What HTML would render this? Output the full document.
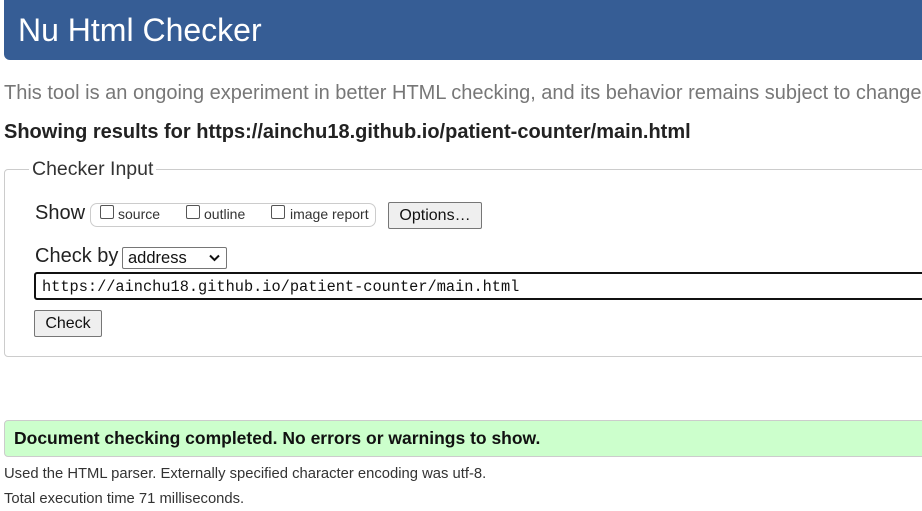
<!DOCTYPE html>
<html><head><style>
body{margin:0;width:922px;height:511px;overflow:hidden;background:#fff;font-family:"Liberation Sans",Arial,sans-serif;position:relative}
.a{position:absolute;white-space:nowrap}
</style></head><body>
<div class="a" style="left:4px;top:0;width:930px;height:60px;background:#365d95;border-radius:0 0 6px 6px"></div>
<div class="a" style="left:18px;top:12px;font-size:32px;color:#fff;line-height:36px">Nu Html Checker</div>
<div class="a" style="left:4px;top:81px;font-size:20px;color:#777;line-height:24px">This tool is an ongoing experiment in better HTML checking, and its behavior remains subject to change</div>
<div class="a" style="left:4px;top:120px;font-size:20px;font-weight:bold;color:#222;line-height:24px;letter-spacing:0px">Showing results for https://ainchu18.github.io/patient-counter/main.html</div>
<div class="a" style="left:4px;top:169px;width:930px;height:186px;border:1px solid #ccc;border-radius:4px"></div>
<div class="a" style="left:29px;top:158px;font-size:19.5px;color:#333;background:#fff;padding:0 3px;line-height:22px">Checker Input</div>
<div class="a" style="left:35px;top:202px;font-size:20px;color:#222;line-height:22px">Show</div>
<div class="a" style="left:90px;top:203px;width:284px;height:22px;border:1px solid #ccc;border-radius:7px"></div>
<div class="a" style="left:100px;top:205px;width:12px;height:12px;border:1px solid #555;border-radius:2px"></div>
<div class="a" style="left:118px;top:206px;font-size:14px;color:#333">source</div>
<div class="a" style="left:186px;top:205px;width:12px;height:12px;border:1px solid #555;border-radius:2px"></div>
<div class="a" style="left:204px;top:206px;font-size:14px;color:#333">outline</div>
<div class="a" style="left:271px;top:205px;width:12px;height:12px;border:1px solid #555;border-radius:2px"></div>
<div class="a" style="left:290px;top:206px;font-size:14px;color:#333">image report</div>
<div class="a" style="left:388px;top:202px;width:92px;height:25px;border:1px solid #767676;border-radius:2px;background:#efefef;font-size:16px;line-height:25px;text-align:center;color:#111">Options…</div>
<div class="a" style="left:35px;top:245px;font-size:20px;color:#222;line-height:22px">Check by</div>
<div class="a" style="left:122px;top:247px;width:103px;height:20px;border:1px solid #767676;border-radius:2px;font-size:16.5px;line-height:20px;color:#111"><span style="padding-left:5px">address</span>
<svg style="position:absolute;right:6px;top:6px" width="11" height="8" viewBox="0 0 11 8"><path d="M1 1.5 5.5 6 10 1.5" fill="none" stroke="#111" stroke-width="2"/></svg></div>
<div class="a" style="left:34px;top:272px;width:900px;height:24px;border:2px solid #111;border-radius:3px"></div>
<div class="a" style="left:42px;top:278px;font-family:'Liberation Mono',monospace;font-size:15.3px;color:#111;line-height:18px">https://ainchu18.github.io/patient-counter/main.html</div>
<div class="a" style="left:34px;top:310px;width:66px;height:25px;border:1px solid #767676;border-radius:2px;background:#efefef;font-size:16px;line-height:25px;text-align:center;color:#111">Check</div>
<div class="a" style="left:4px;top:420px;width:930px;height:35px;background:#ccffcc;border:1px solid #ccc;border-radius:4px"></div>
<div class="a" style="left:14px;top:427px;font-size:17.5px;font-weight:bold;color:#111;line-height:22px">Document checking completed. No errors or warnings to show.</div>
<div class="a" style="left:4px;top:466px;font-size:14.8px;color:#333;line-height:17px">Used the HTML parser. Externally specified character encoding was utf-8.</div>
<div class="a" style="left:4px;top:491px;font-size:14.8px;color:#333;line-height:17px">Total execution time 71 milliseconds.</div>
</body></html>
